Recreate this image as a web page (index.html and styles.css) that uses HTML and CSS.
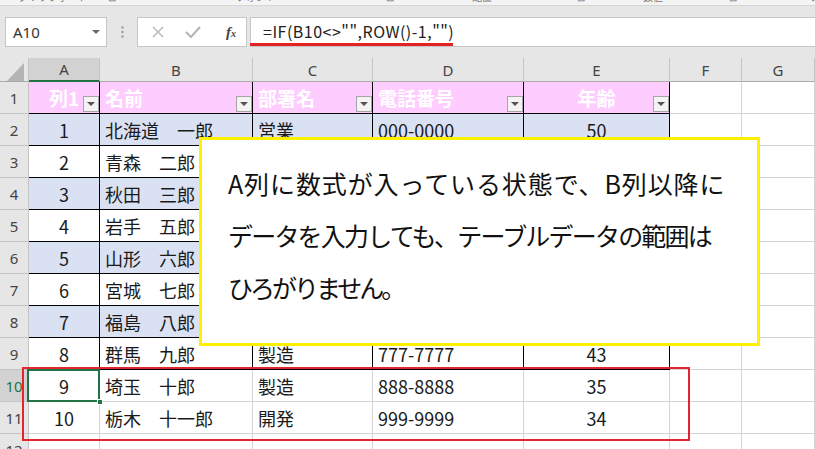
FILE: index.html
```html
<!DOCTYPE html>
<html lang="ja">
<head>
<meta charset="utf-8">
<title>Excel</title>
<link rel="stylesheet" href="styles.css">
</head>
<body>
<div class="ribbon">
  <span class="rl r1">クリップボード</span><span class="ri r2">⊡</span>
  <span class="rl r3">フォント</span><span class="ri r4">⊡</span>
  <span class="rl r5">配置</span><span class="ri r6">⊡</span>
  <span class="rl r7">数値</span><span class="ri r8">⊡</span>
  <span class="rl r9">ス</span>
</div>
<div class="fbar">
  <div class="namebox"><span>A10</span><span class="nb-arrow"></span></div>
  <div class="dots"><svg width="3" height="12" viewBox="0 0 3 12"><circle cx="1.5" cy="1.5" r="1.2" fill="#9a9a9a"/><circle cx="1.5" cy="6" r="1.2" fill="#9a9a9a"/><circle cx="1.5" cy="10.5" r="1.2" fill="#9a9a9a"/></svg></div>
  <div class="fxbox">
    <svg class="ic-x" width="12" height="12" viewBox="0 0 12 12"><path d="M1 1 L11 11 M11 1 L1 11" stroke="#b4b4b4" stroke-width="1.4" fill="none"/></svg>
    <svg class="ic-ok" width="16" height="12" viewBox="0 0 16 12"><path d="M1 6 L6 11 L15 1" stroke="#b4b4b4" stroke-width="2" fill="none"/></svg>
    <span class="ic-fx">f<small>x</small></span>
  </div>
  <div class="formula">=IF(B10&lt;&gt;"",ROW()-1,"")<span class="uline"></span></div>
</div>

<div class="sheet">
  <div class="c corner"><svg width="18" height="18" viewBox="0 0 18 18"><path d="M17 0 L17 18 L0 18 Z" fill="#b4b4b4"/></svg></div>
  <div class="c ch selch">A</div><div class="c ch">B</div><div class="c ch">C</div><div class="c ch">D</div><div class="c ch">E</div><div class="c ch">F</div><div class="c ch">G</div>

  <div class="c rh">1</div>
  <div class="c t hd ctr">列1<span class="dd"></span></div>
  <div class="c t hd">名前<span class="dd"></span></div>
  <div class="c t hd">部署名<span class="dd"></span></div>
  <div class="c t hd">電話番号<span class="dd"></span></div>
  <div class="c t hd ctr">年齢<span class="dd"></span></div>
  <div class="c"></div><div class="c"></div>

  <div class="c rh">2</div>
  <div class="c t band ctr">1</div><div class="c t band">北海道　一郎</div><div class="c t band">営業</div><div class="c t band">000-0000</div><div class="c t band ctr">50</div>
  <div class="c"></div><div class="c"></div>

  <div class="c rh">3</div>
  <div class="c t ctr">2</div><div class="c t">青森　二郎</div><div class="c t"></div><div class="c t"></div><div class="c t"></div>
  <div class="c"></div><div class="c"></div>

  <div class="c rh">4</div>
  <div class="c t band ctr">3</div><div class="c t band">秋田　三郎</div><div class="c t band"></div><div class="c t band"></div><div class="c t band"></div>
  <div class="c"></div><div class="c"></div>

  <div class="c rh">5</div>
  <div class="c t ctr">4</div><div class="c t">岩手　五郎</div><div class="c t"></div><div class="c t"></div><div class="c t"></div>
  <div class="c"></div><div class="c"></div>

  <div class="c rh">6</div>
  <div class="c t band ctr">5</div><div class="c t band">山形　六郎</div><div class="c t band"></div><div class="c t band"></div><div class="c t band"></div>
  <div class="c"></div><div class="c"></div>

  <div class="c rh">7</div>
  <div class="c t ctr">6</div><div class="c t">宮城　七郎</div><div class="c t"></div><div class="c t"></div><div class="c t"></div>
  <div class="c"></div><div class="c"></div>

  <div class="c rh">8</div>
  <div class="c t band ctr">7</div><div class="c t band">福島　八郎</div><div class="c t band"></div><div class="c t band"></div><div class="c t band"></div>
  <div class="c"></div><div class="c"></div>

  <div class="c rh">9</div>
  <div class="c t ctr">8</div><div class="c t">群馬　九郎</div><div class="c t">製造</div><div class="c t">777-7777</div><div class="c t ctr">43</div>
  <div class="c"></div><div class="c"></div>

  <div class="c rh selrh">10</div>
  <div class="c ctr sel">9<span class="handle"></span></div><div class="c">埼玉　十郎</div><div class="c">製造</div><div class="c">888-8888</div><div class="c ctr">35</div>
  <div class="c"></div><div class="c"></div>

  <div class="c rh">11</div>
  <div class="c ctr">10</div><div class="c">栃木　十一郎</div><div class="c">開発</div><div class="c">999-9999</div><div class="c ctr">34</div>
  <div class="c"></div><div class="c"></div>

  <div class="c rh">12</div>
  <div class="c"></div><div class="c"></div><div class="c"></div><div class="c"></div><div class="c"></div><div class="c"></div><div class="c"></div>
</div>

<div class="note">
  <p class="l1">A列に数式が入っている状態で、B列以降に</p>
  <p class="l2">データを入力しても、テーブルデータの範囲は</p>
  <p class="l3">ひろがりません。</p>
</div>
<div class="redbox"></div>
</body>
</html>
```
FILE: styles.css
```css
* { box-sizing: border-box; }
body {
  margin: 0;
  width: 815px;
  height: 449px;
  overflow: hidden;
  background: #fff;
  position: relative;
  font-family: "Noto Sans CJK JP", "Noto Sans", sans-serif;
}

/* ribbon remnant */
.ribbon {
  height: 6px;
  background: #f4f4f4;
  border-bottom: 1px solid #d6d6d6;
  overflow: hidden;
  display: flex;
  font-size: 10px;
  line-height: 14px;
  color: #777;
  white-space: nowrap;
}
.ribbon span { margin-top: -10px; }
.r1 { margin-left: 18px; }
.r2 { margin-left: 20px; }
.r3 { margin-left: 120px; }
.r4 { margin-left: 110px; }
.r5 { margin-left: 78px; }
.r6 { margin-left: 85px; }
.r7 { margin-left: 58px; }
.r8 { margin-left: 66px; }
.r9 { margin-left: 74px; }

/* formula bar */
.fbar {
  height: 52px;
  background: #e6e6e6;
  display: flex;
  align-items: flex-start;
  padding-top: 11px;
}
.namebox {
  margin-left: 5px;
  width: 102px;
  height: 30px;
  background: #fff;
  border: 1px solid #c6c6c6;
  display: flex;
  align-items: center;
  justify-content: space-between;
  padding: 0 6px 0 7px;
  font-family: "Noto Sans", sans-serif;
  font-size: 15px;
  color: #333;
}
.nb-arrow {
  width: 0;
  height: 0;
  border-left: 4px solid transparent;
  border-right: 4px solid transparent;
  border-top: 4px solid #6a6a6a;
}
.dots {
  width: 30px;
  height: 30px;
  display: flex;
  justify-content: center;
  align-items: center;
}
.fxbox {
  width: 110px;
  height: 30px;
  background: #fff;
  border: 1px solid #c6c6c6;
  display: flex;
  align-items: center;
  padding-left: 14px;
}
.ic-x { margin-right: 21px; }
.ic-ok { margin-right: 25px; }
.ic-fx {
  font-family: "Liberation Serif", serif;
  font-style: italic;
  font-size: 15px;
  color: #444;
  font-weight: bold;
}
.ic-fx small { font-size: 10px; }
.formula {
  position: relative;
  margin-left: 3px;
  flex: 1;
  height: 30px;
  background: #fff;
  border: 1px solid #c6c6c6;
  border-right: none;
  padding-left: 12px;
  font-family: "Noto Sans CJK JP", sans-serif;
  font-size: 16px;
  letter-spacing: 0.5px;
  line-height: 26px;
  color: #222;
}
.uline {
  position: absolute;
  left: -1px;
  top: 25px;
  width: 203px;
  height: 3px;
  background: #e52222;
}

/* sheet */
.sheet {
  display: grid;
  grid-template-columns: 29px 71px 153px 120px 151px 146px 72px 1fr;
  grid-template-rows: 24px;
  grid-auto-rows: 32px;
}
.c {
  position: relative;
  border-right: 1px solid #d4d4d4;
  border-bottom: 1px solid #d4d4d4;
  display: flex;
  align-items: center;
  padding: 0 5px;
  font-size: 18px;
  color: #1a1a1a;
  white-space: nowrap;
}
.corner {
  background: #e6e6e6;
  padding: 0 3px 0 0;
  align-items: flex-end;
  justify-content: flex-end;
  border-right-color: #c4c4c4;
  border-bottom-color: #ababab;
}
.ch {
  background: #e6e6e6;
  justify-content: center;
  font-family: "Noto Sans", sans-serif;
  font-size: 15px;
  color: #444;
  border-right-color: #c4c4c4;
  border-bottom-color: #ababab;
  padding: 0;
}
.selch {
  background: #d2d2d2;
  border-bottom: 2px solid #217346;
}
.rh {
  background: #e6e6e6;
  justify-content: center;
  font-family: "Noto Sans", sans-serif;
  font-size: 15px;
  color: #444;
  border-right-color: #c4c4c4;
  border-bottom-color: #c4c4c4;
  padding: 0;
}
.selrh {
  background: #d2d2d2;
  color: #217346;
}
.t {
  border-right-color: #000;
  border-bottom-color: #000;
}
.hd {
  background: #ffccff;
  color: #fff;
  font-weight: bold;
  font-size: 19px;
}
.band { background: #d9e1f2; }
.ctr { justify-content: center; }
.dd {
  position: absolute;
  right: 0;
  bottom: 1px;
  width: 16px;
  height: 16px;
  background: #f3f3f3;
  border: 1px solid #a6a6a6;
}
.dd::after {
  content: "";
  position: absolute;
  left: 3px;
  top: 5px;
  border-left: 4px solid transparent;
  border-right: 4px solid transparent;
  border-top: 4px solid #555;
}
.sel { z-index: 2; }
.sel::after {
  content: "";
  position: absolute;
  left: -2px;
  top: -1px;
  right: -1px;
  bottom: -1px;
  border: 2px solid #217346;
}
.handle {
  position: absolute;
  right: -4px;
  bottom: -4px;
  width: 6px;
  height: 6px;
  background: #217346;
  border: 1px solid #fff;
  z-index: 3;
}

/* annotations */
.note {
  position: absolute;
  left: 199px;
  top: 137px;
  width: 561px;
  height: 209px;
  background: #fff;
  border: 3px solid #fff000;
  padding: 17px 0 0 26px;
  z-index: 5;
  color: #111;
  font-size: 25px;
  line-height: 52px;
}
.note p { margin: 0; white-space: nowrap; }
.l1 { letter-spacing: 0.9px; }
.l2 { letter-spacing: -1.8px; }
.l3 { letter-spacing: -3px; }
.redbox {
  position: absolute;
  left: 22px;
  top: 367px;
  width: 668px;
  height: 74px;
  border: 2px solid #e3262b;
  z-index: 6;
}
```
